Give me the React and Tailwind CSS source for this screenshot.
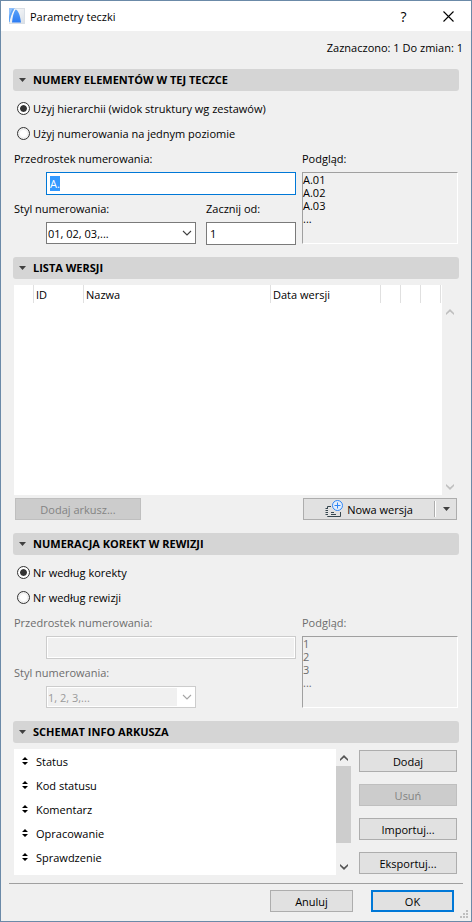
import { useEffect, useRef, useState } from "react";

const VERSION_COLUMNS = [
  { label: "", width: "w-5" },
  { label: "ID", width: "w-[50px]" },
  { label: "Nazwa", width: "" },
  { label: "Data wersji", width: "w-[110px]" },
  { label: "", width: "w-5" },
  { label: "", width: "w-5" },
  { label: "", width: "w-5" },
];

const SCHEME_FIELDS = [
  "Status",
  "Kod statusu",
  "Komentarz",
  "Opracowanie",
  "Sprawdzenie",
];

function AppLogo() {
  return (
    <svg width="16" height="16" viewBox="0 0 16 16" aria-hidden="true">
      <defs>
        <linearGradient id="logo-bg" x1="0" y1="0" x2="1" y2="1">
          <stop offset="0" stopColor="#ffffff" />
          <stop offset="1" stopColor="#d9dfe6" />
        </linearGradient>
        <linearGradient id="logo-arc" x1="0" y1="0" x2="0" y2="1">
          <stop offset="0" stopColor="#5aa2f8" />
          <stop offset="1" stopColor="#2b7bf3" />
        </linearGradient>
      </defs>
      <rect x="0.5" y="0.5" width="15" height="15" fill="url(#logo-bg)" stroke="#d9dfe6" />
      <path d="M0 0H6C3.500 3 1.500 8 0.500 14H0Z" fill="#8fc0fb" />
      <path d="M0 9C0.800 6 2 3 3.500 1L5 1.500C3 4.500 1.500 9 0.500 14H0Z" fill="#5aa2f8" />
      <path d="M3 14.500C3.500 9 4.500 4.500 6.500 1.500C9 1.500 11 7 12 14.500Z" fill="url(#logo-arc)" />
    </svg>
  );
}

function Chevron({ up = false, className = "" }) {
  return (
    <svg width="10" height="6" viewBox="0 0 10 6" className={className} aria-hidden="true">
      <path
        d={up ? "M1 5L5 1L9 5" : "M1 1L5 5L9 1"}
        fill="none"
        stroke="currentColor"
        strokeWidth="1.100"
      />
    </svg>
  );
}

function ScrollArrow({ up = false }) {
  return (
    <svg width="8" height="6" viewBox="0 0 8 6" aria-hidden="true">
      <path d={up ? "M0 6V4L4 0L8 4V6L4 2.500Z" : "M0 0V2L4 6L8 2V0L4 3.500Z"} fill="currentColor" />
    </svg>
  );
}

function Triangle() {
  return (
    <svg width="7" height="4" viewBox="0 0 7 4" aria-hidden="true">
      <path d="M0 0H7L3.500 4Z" fill="#404040" />
    </svg>
  );
}

function SectionBar({ children }) {
  return (
    <h2>
      <button
        type="button"
        aria-expanded="true"
        className="flex h-[22px] w-full items-center gap-[7px] rounded-[3px] bg-[#d5d5d5] pb-px pl-1.5 font-bold"
      >
        <Triangle />
        {children}
      </button>
    </h2>
  );
}

function Radio({ name, checked, onChange, children }) {
  return (
    <label className="flex h-[25px] items-center gap-[3px]">
      <input
        type="radio"
        name={name}
        checked={checked}
        onChange={onChange}
        className="size-[13px] appearance-none rounded-full border border-[#333] bg-white bg-clip-content p-[2px] checked:bg-[#333] checked:shadow-[inset_0_0_0_2px_#fff]"
      />
      {children}
    </label>
  );
}

function PushButton({ className = "", children, ...props }) {
  return (
    <button
      type="button"
      className={`h-[22px] border border-[#adadad] bg-[#e1e1e1] disabled:border-[#bfbfbf] disabled:bg-[#ccc] disabled:text-[#838383] ${className}`}
      {...props}
    >
      {children}
    </button>
  );
}

function NumberingFields({ id, prefix, styles, start, preview, disabled = false, inputRef }) {
  return (
    <div className={`flex gap-1.5 px-px ${disabled ? "text-[#6d6d6d]" : ""}`}>
      <div className="min-w-0 flex-1">
        <label htmlFor={`${id}-prefix`} className="mb-px flex h-[25px] items-center">
          Przedrostek numerowania:
        </label>
        <div className="flex pl-8">
          <input
            id={`${id}-prefix`}
            ref={inputRef}
            defaultValue={prefix}
            disabled={disabled}
            className="h-[23px] w-full min-w-0 border border-[#7a7a7a] bg-white px-[3px] outline-none selection:bg-[#3399ff] selection:text-white focus:border-[#0078d7] disabled:border-[#ccc] disabled:bg-[#f0f0f0] disabled:shadow-[inset_0_0_0_1px_#fff]"
          />
        </div>
        <div className="flex gap-2.5">
          <div className="min-w-0 flex-1">
            <label htmlFor={`${id}-style`} className="flex h-[27px] items-center">
              Styl numerowania:
            </label>
            <div className="relative mb-px ml-8">
              <select
                id={`${id}-style`}
                disabled={disabled}
                className="block h-[22px] w-full appearance-none border border-[#7a7a7a] bg-white px-px opacity-100 disabled:border-[#ccc] disabled:bg-[#f0f0f0] disabled:text-[#9a9a9a] disabled:shadow-[inset_0_0_0_1px_#fff,inset_-18px_0_0_0_#fff]"
              >
                {styles.map((s) => (
                  <option key={s}>{s}</option>
                ))}
              </select>
              <Chevron
                className={`pointer-events-none absolute top-2 right-1 ${disabled ? "text-[#a5a5a5]" : "text-[#404040]"}`}
              />
            </div>
          </div>
          <div className="w-[90px]">
            {start && (
              <>
                <label htmlFor={`${id}-start`} className="flex h-[27px] items-center">
                  Zacznij od:
                </label>
                <input
                  id={`${id}-start`}
                  defaultValue={start}
                  className="block h-[23px] w-full border border-[#7a7a7a] bg-white px-[3px] outline-none"
                />
              </>
            )}
          </div>
        </div>
      </div>
      <div className="flex w-[156px] flex-col">
        <p className="mb-px flex h-[25px] items-center">Podgląd:</p>
        <p className="h-[72px] border border-t-[#a0a0a0] border-r-white border-b-white border-l-[#a0a0a0] leading-[13px] whitespace-pre-line">
          {preview.join("\n")}
        </p>
      </div>
    </div>
  );
}

export default function App() {
  const [hierarchy, setHierarchy] = useState(true);
  const [byIssue, setByIssue] = useState(true);
  const prefixRef = useRef(null);

  useEffect(() => {
    prefixRef.current?.focus();
    prefixRef.current?.select();
  }, []);

  return (
    <div className="relative min-h-screen border border-[#6b8aa8] bg-[#f0f0f0] font-['Open_Sans','Noto_Sans',sans-serif] text-[11px] leading-[15px] text-black">
      <header className="flex h-[30px] items-center bg-white pl-2">
        <AppLogo />
        <h1 className="flex-1 pl-[5px]">Parametry teczki</h1>
        <button type="button" aria-label="Pomoc" className="w-[45px] text-[14px] font-medium">
          ?
        </button>
        <button type="button" aria-label="Zamknij" className="flex w-[45px] justify-center">
          <svg width="11" height="11" viewBox="0 0 11 11" aria-hidden="true">
            <path d="M0.500 0.500L10.500 10.500M10.500 0.500L0.500 10.500" stroke="#000" strokeWidth="1.100" />
          </svg>
        </button>
      </header>

      <p className="pt-2 pr-2 pb-3 text-right leading-[18px]">Zaznaczono: 1 Do zmian: 1</p>

      <main className="px-3">
        <section className="pb-3">
          <SectionBar>NUMERY ELEMENTÓW W TEJ TECZCE</SectionBar>
          <div className="pt-[5px] pl-1">
            <Radio name="mode" checked={hierarchy} onChange={() => setHierarchy(true)}>
              Użyj hierarchii (widok struktury wg zestawów)
            </Radio>
            <Radio name="mode" checked={!hierarchy} onChange={() => setHierarchy(false)}>
              Użyj numerowania na jednym poziomie
            </Radio>
          </div>
          <NumberingFields
            id="items"
            inputRef={prefixRef}
            prefix="A."
            styles={["01, 02, 03,..."]}
            start="1"
            preview={["A.01", "A.02", "A.03", "..."]}
          />
        </section>

        <section className="pb-[13px]">
          <SectionBar>LISTA WERSJI</SectionBar>
          <div className="mx-px mt-1.5 flex h-[210px]">
            <div className="min-w-0 flex-1 bg-white pr-px">
              <table className="w-full table-fixed border-separate border-spacing-0">
                <thead>
                  <tr>
                    {VERSION_COLUMNS.map((col, i) => (
                      <th
                        key={i}
                        className={`h-[18px] border-r border-[#e0e0e0] p-0 pl-0.5 text-left font-normal ${col.width}`}
                      >
                        {col.label}
                      </th>
                    ))}
                  </tr>
                </thead>
              </table>
            </div>
            <div className="flex w-4 flex-col items-center justify-between pt-6 pb-[5px] text-[#bfbfbf]">
              <ScrollArrow up />
              <ScrollArrow />
            </div>
          </div>
          <div className="mx-0.5 mt-[3px] flex justify-between">
            <PushButton disabled className="w-[126px]">
              Dodaj arkusz...
            </PushButton>
            <div className="flex h-[22px] w-[154px] border border-[#adadad] bg-[#e1e1e1]">
              <button type="button" className="flex flex-1 items-center justify-center gap-1">
                <svg width="18" height="18" viewBox="0 0 18 18" fill="none" aria-hidden="true">
                  <path
                    d="M6 6.500H2.500V8M15.500 12V16.500H2.500V16M0.500 8.500H3M0.500 10.500H3M0.500 12.500H3M0.500 14.500H3M6 12.500H9M6 14.500H11"
                    stroke="#37474f"
                  />
                  <circle cx="12.500" cy="5.500" r="5" fill="#e4eefb" stroke="#2f86f6" />
                  <path d="M12.500 2.500V8.500M9.500 5.500H15.500" stroke="#2f86f6" />
                </svg>
                Nowa wersja
              </button>
              <div className="my-0.5 border-r border-l border-r-white border-l-[#adadad]" />
              <button type="button" aria-label="Więcej" className="flex w-5 items-center justify-center">
                <Triangle />
              </button>
            </div>
          </div>
        </section>

        <section className="pb-3">
          <SectionBar>NUMERACJA KOREKT W REWIZJI</SectionBar>
          <div className="pt-[5px] pl-1">
            <Radio name="revision" checked={byIssue} onChange={() => setByIssue(true)}>
              Nr według korekty
            </Radio>
            <Radio name="revision" checked={!byIssue} onChange={() => setByIssue(false)}>
              Nr według rewizji
            </Radio>
          </div>
          <NumberingFields
            id="revisions"
            prefix=""
            styles={["1, 2, 3,..."]}
            preview={["1", "2", "3", "..."]}
            disabled
          />
        </section>

        <section>
          <SectionBar>SCHEMAT INFO ARKUSZA</SectionBar>
          <div className="mx-px mt-1.5 flex">
            <ul className="h-[126px] flex-1 bg-white">
              {SCHEME_FIELDS.map((field) => (
                <li key={field} className="flex h-6 items-center gap-2 pl-2">
                  <svg width="6" height="8" viewBox="0 0 6 8" aria-hidden="true">
                    <path d="M0 3L3 0L6 3ZM0 5H6L3 8Z" fill="#000" />
                  </svg>
                  {field}
                </li>
              ))}
            </ul>
            <div className="flex w-[15px] flex-col items-center pt-1.5 pb-[5px] text-[#555]">
              <ScrollArrow up />
              <div className="mt-[5px] h-[77px] w-full bg-[#cdcdcd]" />
              <div className="flex flex-1 items-end">
                <ScrollArrow />
              </div>
            </div>
            <div className="mr-px ml-2 flex w-[98px] flex-col gap-3 pt-px">
              <PushButton>Dodaj</PushButton>
              <PushButton disabled>Usuń</PushButton>
              <PushButton>Importuj...</PushButton>
              <PushButton>Eksportuj...</PushButton>
            </div>
          </div>
        </section>
      </main>

      <footer className="mx-2 mt-2 flex justify-end gap-[18px] border-t border-[#a0a0a0] pt-1.5 pr-[9px] pb-2">
        <PushButton className="w-[83px]">Anuluj</PushButton>
        <button type="button" className="h-[22px] w-[83px] border-2 border-[#0078d7] bg-[#e1e1e1]">
          OK
        </button>
      </footer>

      <svg width="9" height="9" viewBox="0 0 9 9" className="absolute right-0.5 bottom-0.5" aria-hidden="true">
        <path d="M6 0h2v2h-2zM3 3h2v2h-2zM6 3h2v2h-2zM0 6h2v2h-2zM3 6h2v2h-2zM6 6h2v2h-2z" fill="#bfbfbf" />
      </svg>
    </div>
  );
}
